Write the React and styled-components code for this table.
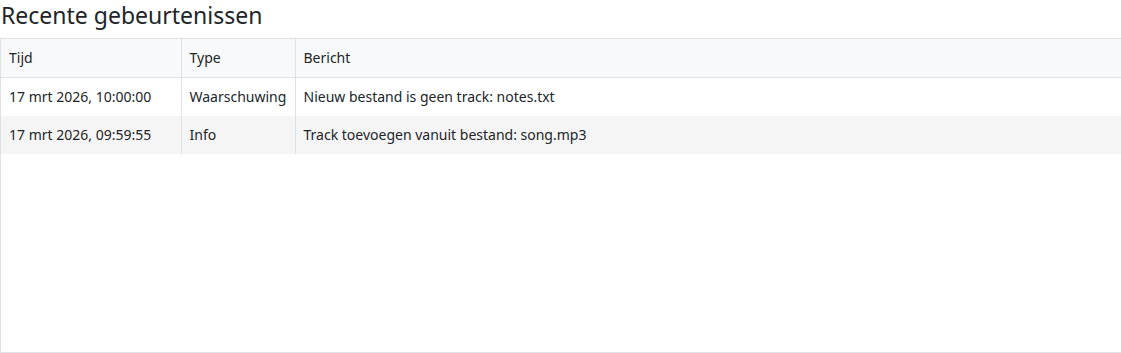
import styled, { createGlobalStyle } from 'styled-components';

const GlobalStyle = createGlobalStyle`
  html, body {
    margin: 0;
    padding: 0;
    background: #ffffff;
    overflow: hidden;
  }
  body {
    font-family: "Segoe UI", "Noto Sans", "Liberation Sans", sans-serif;
    color: #212529;
  }
`;

const Page = styled.div`
  display: flex;
  flex-direction: column;
  height: 353px;
`;

const Title = styled.h2`
  margin: 0;
  height: 38px;
  padding-left: 1px;
  font-size: 23px;
  font-weight: 400;
  line-height: 30px;
  color: #212529;
`;

const Panel = styled.div`
  flex: 1;
  border: 1px solid #dee2e6;
  border-right: none;
  overflow: auto;
`;

const Table = styled.table`
  width: 100%;
  border-collapse: collapse;
  table-layout: fixed;
  font-size: 14px;
`;

const HeadCell = styled.th`
  width: ${(p) => p.$width || 'auto'};
  padding: 8px 8px;
  height: 38px;
  box-sizing: border-box;
  line-height: 22px;
  text-align: left;
  font-weight: 400;
  background: #f8f9fa;
  border-bottom: 1px solid #dee2e6;
  border-right: 1px solid #dee2e6;

  &:last-child {
    border-right: none;
  }
`;

const Row = styled.tr`
  background: ${(p) => (p.$striped ? '#f5f5f5' : '#ffffff')};
`;

const Cell = styled.td`
  padding: 8px 8px;
  height: 38px;
  box-sizing: border-box;
  line-height: 22px;
  white-space: nowrap;
  border-right: 1px solid #dee2e6;

  &:last-child {
    border-right: none;
  }
`;

const events = [
  { time: '17 mrt 2026, 10:00:00', type: 'Waarschuwing', message: 'Nieuw bestand is geen track: notes.txt' },
  { time: '17 mrt 2026, 09:59:55', type: 'Info', message: 'Track toevoegen vanuit bestand: song.mp3' },
];

export default function App() {
  return (
    <>
      <GlobalStyle />
      <Page>
        <Title>Recente gebeurtenissen</Title>
        <Panel>
          <Table>
            <thead>
              <tr>
                <HeadCell $width="180px">Tijd</HeadCell>
                <HeadCell $width="114px">Type</HeadCell>
                <HeadCell>Bericht</HeadCell>
              </tr>
            </thead>
            <tbody>
              {events.map((e, i) => (
                <Row key={i} $striped={i % 2 === 1}>
                  <Cell>{e.time}</Cell>
                  <Cell>{e.type}</Cell>
                  <Cell>{e.message}</Cell>
                </Row>
              ))}
            </tbody>
          </Table>
        </Panel>
      </Page>
    </>
  );
}
